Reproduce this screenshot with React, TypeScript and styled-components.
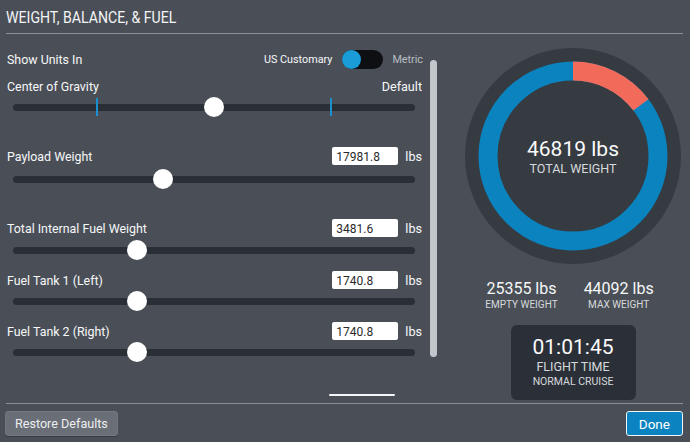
import React from 'react'
import styled, { createGlobalStyle } from 'styled-components'

const GlobalStyle = createGlobalStyle`
  html, body {
    margin: 0;
    padding: 0;
    background: #4a4f57;
  }
  body {
    font-family: Roboto, "Liberation Sans", sans-serif;
    color: #f2f3f4;
  }
`

const Page = styled.div`
  width: 690px;
  height: 442px;
  box-sizing: border-box;
  padding: 0 7px 0 6px;
  background: #4a4f57;
  display: flex;
  flex-direction: column;
  overflow: hidden;
`

const Header = styled.div`
  height: 33px;
  border-bottom: 1px solid #8b9097;
  display: flex;
  align-items: center;
`

const Title = styled.h1`
  margin: 0;
  font-size: 17px;
  font-weight: 400;
  line-height: 20px;
  color: #f4f5f6;
  transform: scaleX(0.83);
  transform-origin: left center;
  white-space: nowrap;
`

const Main = styled.div`
  height: 369px;
  display: flex;
`

const LeftPanel = styled.div`
  width: 418px;
  display: flex;
  flex-direction: column;
`

const Row = styled.div<{ $top: number }>`
  margin-top: ${p => p.$top}px;
  display: flex;
  align-items: center;
  height: 18px;
  padding-left: 1px;
`

const Label = styled.span`
  font-size: 12.4px;
  color: #f7f8f9;
  flex: 1;
  white-space: nowrap;
`

const SmallLabel = styled.span<{ $dim?: boolean }>`
  font-size: 10.8px;
  color: ${p => (p.$dim ? '#b9bdc2' : '#f7f8f9')};
`

const Toggle = styled.div`
  width: 41px;
  height: 19px;
  border-radius: 10px;
  background: #0d0f12;
  margin: 0 9px 0 10px;
  display: flex;
  align-items: center;
`

const ToggleKnob = styled.div`
  width: 19px;
  height: 19px;
  border-radius: 50%;
  background: #1a9cd9;
`

const ValueInput = styled.div`
  width: 66px;
  height: 18px;
  box-sizing: border-box;
  background: #fff;
  border-radius: 2px;
  font-size: 12px;
  color: #2a2a2a;
  padding: 3px 0 0 4px;
  line-height: 14px;
`

const Unit = styled.span`
  font-size: 12.6px;
  margin: 0 2px 0 7px;
  color: #f7f8f9;
`

const SliderWrap = styled.div<{ $top: number }>`
  margin-top: ${p => p.$top}px;
  height: 22px;
  padding: 0 9px 0 7px;
  display: flex;
  align-items: center;
`

const Track = styled.div`
  position: relative;
  flex: 1;
  height: 7px;
  border-radius: 4px;
  background: #2a2f36;
`

const Knob = styled.div`
  position: absolute;
  top: 50%;
  width: 20px;
  height: 20px;
  margin: -10px 0 0 -10px;
  border-radius: 50%;
  background: #fff;
`

const Tick = styled.div`
  position: absolute;
  top: 50%;
  width: 2px;
  height: 18px;
  margin: -9px 0 0 -1px;
  background: #1a8fd0;
`

const PageIndicator = styled.div`
  margin: 31px 0 0 323px;
  width: 66px;
  height: 2px;
  background: #f4f5f6;
  border-radius: 1px;
`

const ScrollBar = styled.div`
  margin: 26px 0 0 6px;
  width: 7px;
  height: 297px;
  border-radius: 4px;
  background: #c3c7cb;
`

const RightPanel = styled.div`
  margin-left: 26px;
  width: 220px;
  display: flex;
  flex-direction: column;
  align-items: center;
`

const Gauge = styled.div`
  margin-top: 14px;
  width: 216px;
  height: 216px;
  display: grid;
  & > * {
    grid-area: 1 / 1;
  }
`

const GaugeText = styled.div`
  display: flex;
  flex-direction: column;
  align-items: center;
  justify-content: center;
  padding-top: 2px;
`

const BigNumber = styled.div`
  font-size: 21px;
  font-weight: 400;
  line-height: 24px;
  color: #fafafa;
`

const Caption = styled.div<{ $size: number }>`
  font-size: ${p => p.$size}px;
  line-height: ${p => p.$size + 3}px;
  color: #d6d9dc;
  text-transform: uppercase;
`

const Stats = styled.div`
  margin-top: 15px;
  display: flex;
  gap: 26px;
  margin-right: 7px;
`

const Stat = styled.div`
  display: flex;
  flex-direction: column;
  align-items: center;
`

const StatValue = styled.div`
  font-size: 16px;
  line-height: 19px;
  color: #f6f7f8;
`

const FlightBox = styled.div`
  margin-top: 14px;
  width: 125px;
  height: 75px;
  box-sizing: border-box;
  padding-top: 10px;
  border-radius: 6px;
  background: #2b3038;
  display: flex;
  flex-direction: column;
  align-items: center;
`

const Footer = styled.div`
  border-top: 1px solid #8b9097;
  flex: 1;
  display: flex;
  justify-content: space-between;
  align-items: flex-start;
  padding-top: 7px;
`

const Button = styled.button<{ $primary?: boolean }>`
  height: 25px;
  box-sizing: border-box;
  font-family: Roboto, "Liberation Sans", sans-serif;
  font-size: ${p => (p.$primary ? '13.5px' : '12.6px')};
  border-radius: 3px;
  cursor: pointer;
  color: ${p => (p.$primary ? '#fff' : '#eceef0')};
  background: ${p => (p.$primary ? '#0b83c0' : '#6a6f77')};
  border: ${p => (p.$primary ? '1px solid #f2f4f6' : '1px solid #737880')};
  padding: ${p => (p.$primary ? '0 12px' : '0 9px')};
  margin-left: ${p => (p.$primary ? '0' : '-1px')};
  box-shadow: ${p => (p.$primary ? 'none' : '0 1px 1px rgba(0,0,0,0.25)')};
`

type FieldProps = {
  label: string
  value: string
  top: number
}

const Field: React.FC<FieldProps> = ({ label, value, top }) => (
  <Row $top={top}>
    <Label>{label}</Label>
    <ValueInput>{value}</ValueInput>
    <Unit>lbs</Unit>
  </Row>
)

const Slider: React.FC<{ value: number; top: number; ticks?: number[] }> = ({ value, top, ticks }) => (
  <SliderWrap $top={top}>
    <Track>
      {ticks?.map(t => <Tick key={t} style={{ left: `${t}%` }} />)}
      <Knob style={{ left: `${value}%` }} />
    </Track>
  </SliderWrap>
)

const WeightGauge = () => {
  const r = 85
  const c = 108
  const redAngle = 53
  const rad = ((redAngle - 90) * Math.PI) / 180
  const ex = c + r * Math.cos(rad)
  const ey = c + r * Math.sin(rad)
  return (
    <Gauge>
      <svg width="216" height="216" viewBox="0 0 216 216">
        <circle cx={c} cy={c} r={108} fill="#363b42" />
        <circle cx={c} cy={c} r={r} fill="none" stroke="#0a83bf" strokeWidth={19} />
        <path d={`M ${c} ${c - r} A ${r} ${r} 0 0 1 ${ex} ${ey}`} fill="none" stroke="#f26a5a" strokeWidth={19} />
      </svg>
      <GaugeText>
        <BigNumber>46819 lbs</BigNumber>
        <Caption $size={12.5}>Total Weight</Caption>
      </GaugeText>
    </Gauge>
  )
}

export default function App() {
  return (
    <>
      <GlobalStyle />
      <Page>
        <Header>
          <Title>WEIGHT, BALANCE, &amp; FUEL</Title>
        </Header>
        <Main>
          <LeftPanel>
            <Row $top={16}>
              <Label>Show Units In</Label>
              <SmallLabel>US Customary</SmallLabel>
              <Toggle>
                <ToggleKnob />
              </Toggle>
              <SmallLabel $dim>Metric</SmallLabel>
              <span style={{ width: 1 }} />
            </Row>
            <Row $top={9}>
              <Label>Center of Gravity</Label>
              <Unit>Default</Unit>
            </Row>
            <Slider value={50} top={1} ticks={[21, 79]} />
            <Field label="Payload Weight" value="17981.8" top={29} />
            <Slider value={37.3} top={3} />
            <Field label="Total Internal Fuel Weight" value="3481.6" top={29} />
            <Slider value={30.8} top={2} />
            <Field label="Fuel Tank 1 (Left)" value="1740.8" top={10} />
            <Slider value={30.8} top={1} />
            <Field label="Fuel Tank 2 (Right)" value="1740.8" top={10} />
            <Slider value={30.8} top={1} />
            <PageIndicator />
          </LeftPanel>
          <ScrollBar />
          <RightPanel>
            <WeightGauge />
            <Stats>
              <Stat>
                <StatValue>25355 lbs</StatValue>
                <Caption $size={10}>Empty Weight</Caption>
              </Stat>
              <Stat>
                <StatValue>44092 lbs</StatValue>
                <Caption $size={10}>Max Weight</Caption>
              </Stat>
            </Stats>
            <FlightBox>
              <BigNumber>01:01:45</BigNumber>
              <Caption $size={12.5}>Flight Time</Caption>
              <Caption $size={10.5}>Normal Cruise</Caption>
            </FlightBox>
          </RightPanel>
        </Main>
        <Footer>
          <Button>Restore Defaults</Button>
          <Button $primary>Done</Button>
        </Footer>
      </Page>
    </>
  )
}
